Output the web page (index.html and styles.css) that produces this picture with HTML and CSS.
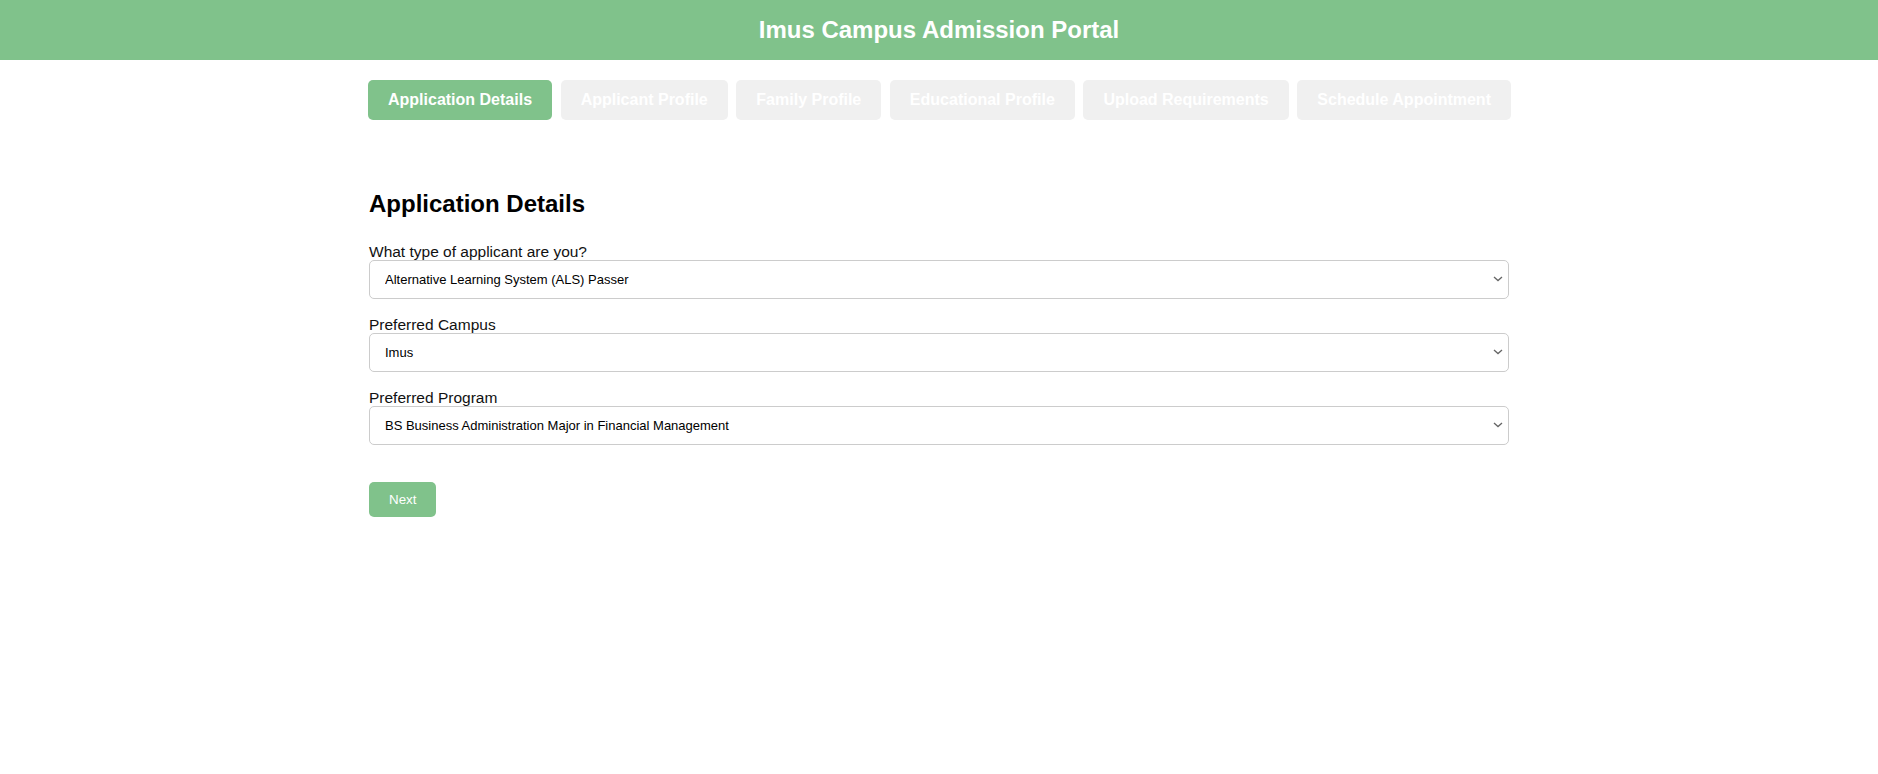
FILE: index.html
```html
<!DOCTYPE html>
<html lang="en">
<head>
<meta charset="utf-8">
<title>Imus Campus Admission Portal</title>
<link rel="stylesheet" href="styles.css">
</head>
<body>
<header class="topbar">
  <h1 class="topbar-title">Imus Campus Admission Portal</h1>
</header>
<main class="container">
  <nav class="tabs">
    <div class="tab tab-active">Application Details</div>
    <div class="tab">Applicant Profile</div>
    <div class="tab">Family Profile</div>
    <div class="tab">Educational Profile</div>
    <div class="tab">Upload Requirements</div>
    <div class="tab">Schedule Appointment</div>
  </nav>
  <form class="form">
    <h2 class="form-title">Application Details</h2>
    <div class="field">
      <label class="field-label" for="type">What type of applicant are you?</label>
      <select class="field-select" id="type">
        <option>Alternative Learning System (ALS) Passer</option>
      </select>
    </div>
    <div class="field">
      <label class="field-label" for="campus">Preferred Campus</label>
      <select class="field-select" id="campus">
        <option>Imus</option>
      </select>
    </div>
    <div class="field">
      <label class="field-label" for="program">Preferred Program</label>
      <select class="field-select" id="program">
        <option>BS Business Administration Major in Financial Management</option>
      </select>
    </div>
    <button type="button" class="btn-next">Next</button>
  </form>
</main>
</body>
</html>
```

FILE: styles.css
```css
* { box-sizing: border-box; }
html, body {
  margin: 0;
  padding: 0;
  background: #ffffff;
  font-family: "Liberation Sans", Arial, sans-serif;
  color: #000;
}
.topbar {
  height: 60px;
  background: #80c28b;
  display: flex;
  align-items: center;
  justify-content: center;
}
.topbar-title {
  margin: 0;
  font-size: 24px;
  font-weight: bold;
  color: #ffffff;
}
.container {
  width: 1140px;
  margin: 0 auto;
}
.tabs {
  display: flex;
  gap: 8.6px;
  margin-top: 20px;
  margin-left: -1px;
}
.tab {
  height: 40px;
  line-height: 40px;
  padding: 0 20px;
  border-radius: 5px;
  background: #f0f0f0;
  color: #ffffff;
  font-size: 16px;
  font-weight: bold;
  white-space: nowrap;
}
.tab-active {
  background: #80c28b;
}
.form {
  margin: 0;
}
.form-title {
  margin: 70px 0 25px;
  font-size: 24px;
  font-weight: bold;
  line-height: 27.6px;
}
.field {
  margin-bottom: 17px;
}
.field-label {
  display: block;
  font-size: 15.5px;
  line-height: 17px;
  color: #111;
}
.field-select {
  display: block;
  width: 100%;
  height: 39px;
  padding: 0 24px 0 15px;
  border: 1px solid #cccccc;
  border-radius: 5px;
  background-color: #ffffff;
  background-image: url("data:image/svg+xml;utf8,<svg xmlns='http://www.w3.org/2000/svg' width='10' height='6' viewBox='0 0 10 6'><path d='M1 1 L5 4.6 L9 1' fill='none' stroke='%23666' stroke-width='1.3'/></svg>");
  background-repeat: no-repeat;
  background-position: right 5px center;
  background-size: 10px 6px;
  -webkit-appearance: none;
  appearance: none;
  color: #000;
  font-family: "Liberation Sans", Arial, sans-serif;
  font-size: 13px;
}
.btn-next {
  margin-top: 20px;
  height: 35px;
  padding: 0 20px;
  border: none;
  border-radius: 5px;
  background: #80c28b;
  color: #ffffff;
  font-family: "Liberation Sans", Arial, sans-serif;
  font-size: 13.33px;
}
```
